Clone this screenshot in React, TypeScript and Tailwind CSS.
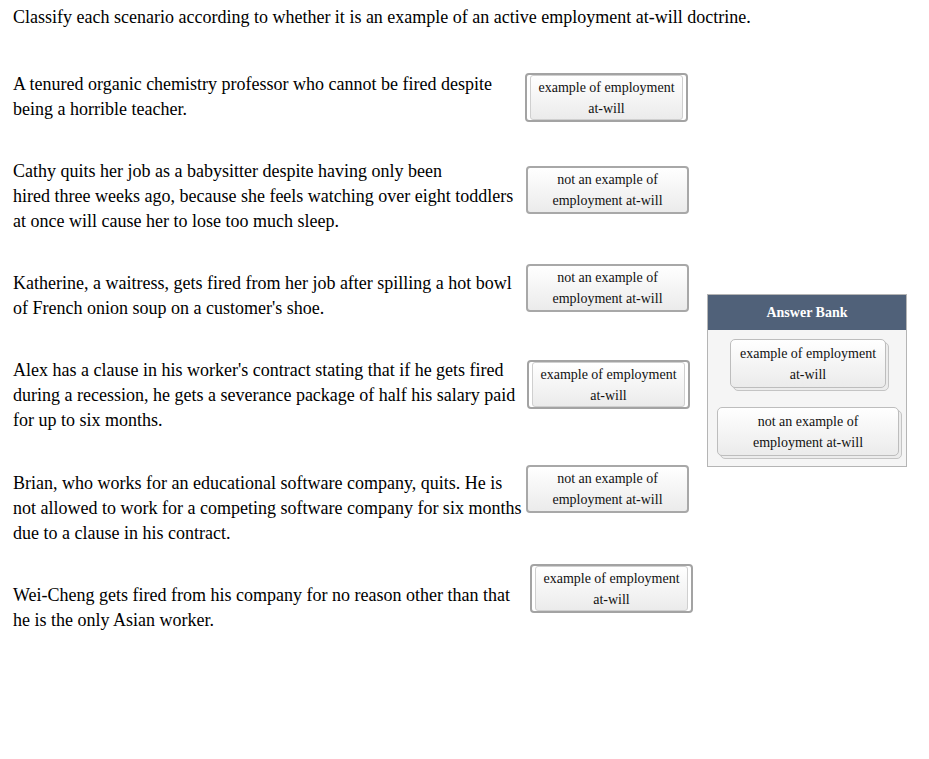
const serif = { fontFamily: '"Liberation Serif", "Times New Roman", Times, serif' };

type Row = {
  lines: string[];
  kind: "yes" | "no";
  slotTop: string;
  slotLeft: string;
  extra?: string;
};

const ROWS: Row[] = [
  {
    lines: ["A tenured organic chemistry professor who cannot be fired despite", "being a horrible teacher."],
    kind: "yes",
    slotTop: "mt-[1px]",
    slotLeft: "ml-[12px]",
  },
  {
    lines: [
      "Cathy quits her job as a babysitter despite having only been",
      "hired three weeks ago, because she feels watching over eight toddlers",
      "at once will cause her to lose too much sleep.",
    ],
    kind: "no",
    slotTop: "mt-[7px]",
    slotLeft: "ml-[13px]",
  },
  {
    lines: ["Katherine, a waitress, gets fired from her job after spilling a hot bowl", "of French onion soup on a customer's shoe."],
    kind: "no",
    slotTop: "-mt-[7px]",
    slotLeft: "ml-[13px]",
  },
  {
    lines: [
      "Alex has a clause in his worker's contract stating that if he gets fired",
      "during a recession, he gets a severance package of half his salary paid",
      "for up to six months.",
    ],
    kind: "yes",
    slotTop: "mt-[2px]",
    slotLeft: "ml-[14px]",
  },
  {
    lines: [
      "Brian, who works for an educational software company, quits. He is",
      "not allowed to work for a competing software company for six months",
      "due to a clause in his contract.",
    ],
    kind: "no",
    slotTop: "-mt-[6px]",
    slotLeft: "ml-[13px]",
    extra: "mt-[1px]",
  },
  {
    lines: ["Wei-Cheng gets fired from his company for no reason other than that", "he is the only Asian worker."],
    kind: "yes",
    slotTop: "-mt-[19px]",
    slotLeft: "ml-[17px]",
  },
];

function TileText({ kind }: { kind: "yes" | "no" }) {
  return kind === "yes" ? (
    <>
      example of employment
      <br />
      at-will
    </>
  ) : (
    <>
      not an example of
      <br />
      employment at-will
    </>
  );
}

function Slot({ kind }: { kind: "yes" | "no" }) {
  if (kind === "yes") {
    return (
      <div className="w-[163px] h-[49px] rounded-[4px] border-2 border-[#a3a3a3] px-[3px] bg-white">
        <div className="h-full rounded-[3px] border border-[#cfcfcf] bg-gradient-to-b from-white to-[#ebebeb] flex items-center justify-center text-center text-[14px] leading-[21px] text-[#111]">
          <span>
            <TileText kind="yes" />
          </span>
        </div>
      </div>
    );
  }
  return (
    <div className="w-[163px] h-[48px] rounded-[4px] border-2 border-[#a8a8a8] bg-gradient-to-b from-white to-[#ebebeb] flex items-center justify-center text-center text-[14px] leading-[21px] text-[#111]">
      <span>
        <TileText kind="no" />
      </span>
    </div>
  );
}

function BankTile({ kind, width }: { kind: "yes" | "no"; width: string }) {
  return (
    <div className={`relative ${width} h-[49px]`}>
      <div className="absolute left-[3px] top-[3px] right-[-3px] bottom-[-3px] rounded-[5px] border border-[#c4c4c4] bg-[#ececec]" />
      <div className="relative h-full rounded-[5px] border border-[#bdbdbd] bg-gradient-to-b from-white to-[#ebebeb] flex items-center justify-center text-center text-[14px] leading-[21px] text-[#111]">
        <span>
          <TileText kind={kind} />
        </span>
      </div>
    </div>
  );
}

export default function App() {
  return (
    <div className="min-h-screen bg-white text-black" style={serif}>
      <div className="pl-[13px] pt-[5px] text-[18px] leading-[25px]">
        Classify each scenario according to whether it is an example of an active employment at-will doctrine.
      </div>

      <div className="flex pl-[13px] mt-[42px]">
        <div className="flex flex-col gap-[37px]">
          {ROWS.map((r, i) => (
            <div key={i} className={`flex items-start ${r.extra ?? ""}`}>
              <div className="w-[500px] text-[18px] leading-[25px] whitespace-nowrap">
                {r.lines.map((l, j) => (
                  <div key={j}>{l}</div>
                ))}
              </div>
              <div className={`${r.slotTop} ${r.slotLeft}`}>
                <Slot kind={r.kind} />
              </div>
            </div>
          ))}
        </div>

        <div className="ml-[14px] mt-[222px] w-[200px] h-[173px] border border-[#b5b5b5] bg-[#f5f5f5] self-start">
          <div className="h-[35px] bg-[#506179] text-white font-bold text-[14px] flex items-center justify-center">
            Answer Bank
          </div>
          <div className="flex flex-col items-center pt-[9px]">
            <div className="ml-[2px]">
              <BankTile kind="yes" width="w-[156px]" />
            </div>
            <div className="mt-[19px] ml-[2px]">
              <BankTile kind="no" width="w-[182px]" />
            </div>
          </div>
        </div>
      </div>
    </div>
  );
}
